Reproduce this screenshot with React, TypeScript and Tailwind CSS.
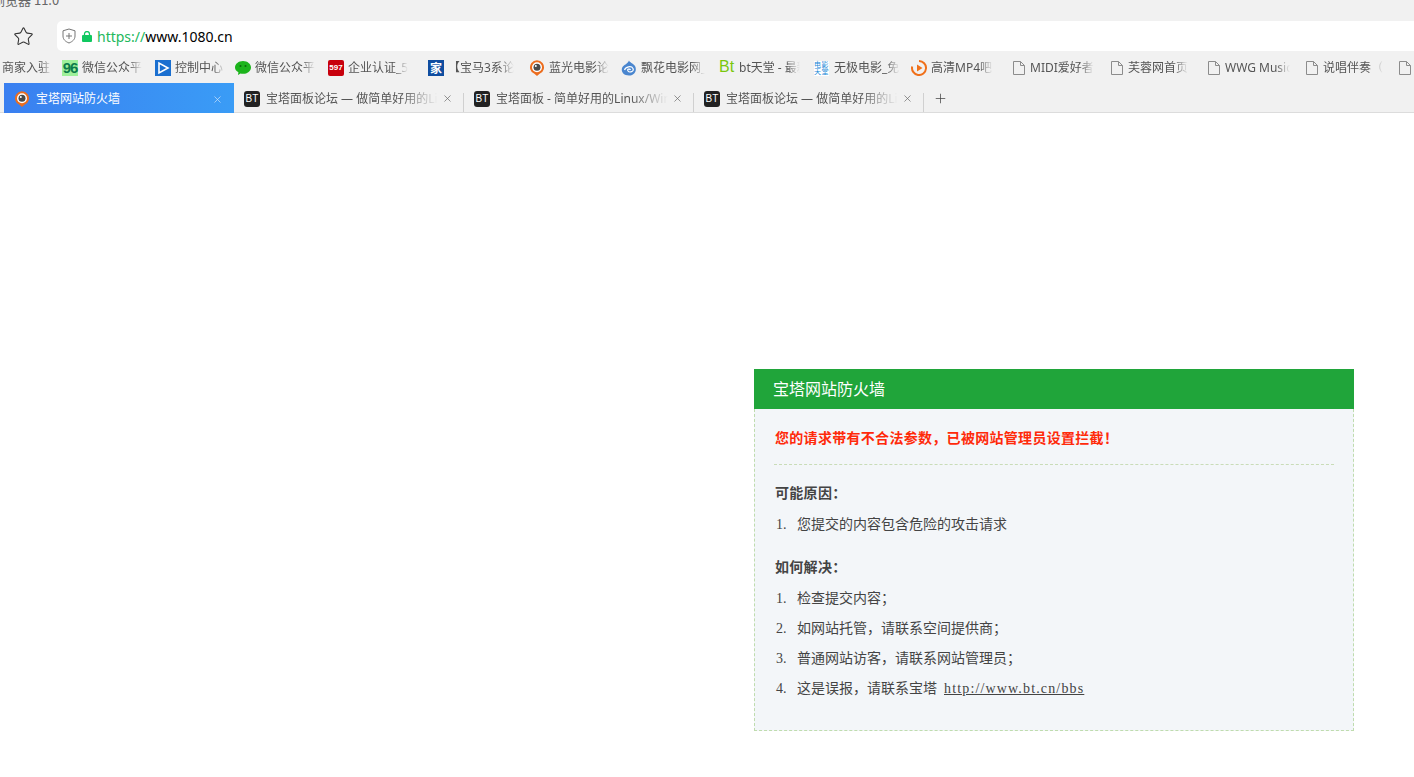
import { ReactNode } from 'react'
import { Star, Plus, X } from 'lucide-react'

const fade = '[mask-image:linear-gradient(to_right,#000_78%,transparent)]'

const DocIcon = () => (
  <svg width="12" height="14" viewBox="0 0 12 14" fill="none" stroke="#8c8c8c" strokeWidth="1" className="mr-[1px]">
    <path d="M.5.5h7l4 4v9H.5z" />
    <path d="M7.5.5v4h4" />
  </svg>
)

const PinIcon = ({ size = 16 }: { size?: number }) => (
  <svg width={size} height={size} viewBox="0 0 16 16">
    <path d="M8 16 5.4 13.8A7 7 0 1 1 10.6 13.8z" fill="#ec6d1e" />
    <circle cx="8" cy="7.2" r="5" fill="#fff" />
    <circle cx="8" cy="7.2" r="3.5" fill="#4a4a4a" />
    <circle cx="6.8" cy="6" r="1" fill="#fff" />
  </svg>
)

const BtIcon = () => (
  <span className="flex h-4 w-4 shrink-0 items-center justify-center rounded-[3px] bg-[#222] font-['Liberation_Sans',sans-serif] text-[10px] text-white">
    BT
  </span>
)

const bookmarks: { width: string; text: string; textWidth: string; icon?: ReactNode }[] = [
  { width: 'w-[60px]', textWidth: 'w-[50px]', text: '商家入驻' },
  {
    width: 'w-[93px]',
    textWidth: 'w-[60px]',
    text: '微信公众平台',
    icon: (
      <span className="flex h-4 w-4 items-center justify-center bg-[#9ef09a] font-['Liberation_Sans',sans-serif] text-[15px] font-bold tracking-[-1px] text-[#0c7a4a]">
        96
      </span>
    ),
  },
  {
    width: 'w-[80px]',
    textWidth: 'w-[50px]',
    text: '控制中心',
    icon: (
      <svg width="16" height="16" viewBox="0 0 16 16">
        <rect width="16" height="16" fill="#1a6fd0" />
        <path d="M4 3v10l9-5z" fill="#1a6fd0" stroke="#fff" strokeWidth="1.6" />
      </svg>
    ),
  },
  {
    width: 'w-[93px]',
    textWidth: 'w-[60px]',
    text: '微信公众平台',
    icon: (
      <svg width="16" height="16" viewBox="0 0 16 16">
        <path d="M8 1c4.400 0 8 2.900 8 6.400s-3.600 6.400-8 6.400c-.9 0-1.700-.1-2.500-.3L3 15l.4-2.800C1.300 11.100 0 9.300 0 7.400 0 3.900 3.600 1 8 1z" fill="#1cb41c" />
        <circle cx="5.500" cy="6" r="1" fill="#0a6a0a" />
        <circle cx="10.500" cy="6" r="1" fill="#0a6a0a" />
      </svg>
    ),
  },
  {
    width: 'w-[100px]',
    textWidth: 'w-[60px]',
    text: '企业认证_597',
    icon: (
      <span className="flex h-4 w-4 items-center justify-center rounded-[2px] bg-[#c8000c] font-['Liberation_Sans',sans-serif] text-[8px] font-bold text-white">
        597
      </span>
    ),
  },
  {
    width: 'w-[101px]',
    textWidth: 'w-[66px]',
    text: '【宝马3系论坛',
    icon: (
      <span className="flex h-4 w-4 items-center justify-center bg-[#0f4da0] font-['Noto_Sans_CJK_SC',sans-serif] text-[12px] font-bold leading-none text-white">
        家
      </span>
    ),
  },
  { width: 'w-[92px]', textWidth: 'w-[60px]', text: '蓝光电影论坛', icon: <PinIcon /> },
  {
    width: 'w-[98px]',
    textWidth: 'w-[64px]',
    text: '飘花电影网_',
    icon: (
      <svg width="16" height="16" viewBox="0 0 16 16">
        <path d="M8 .5c.5 2 4 2.500 6 5.500 2 3.500.5 9.500-6 9.500S-.5 10.500 1.500 7C3 5 7 3.500 8 .5z" fill="#4a86cf" />
        <path d="M3.500 10c1-3.500 7-4.500 8.500-1.500s-3.500 4.500-5 2.500 2-2.500 2.500-1" fill="none" stroke="#fff" strokeWidth="1.200" />
      </svg>
    ),
  },
  {
    width: 'w-[95px]',
    textWidth: 'w-[61px]',
    text: 'bt天堂 - 最新',
    icon: <span className="-mt-[2px] block w-4 font-['Liberation_Sans',sans-serif] text-[16px] leading-none text-[#7ac70c]">Bt</span>,
  },
  {
    width: 'w-[97px]',
    textWidth: 'w-[66px]',
    text: '无极电影_免费',
    icon: (
      <span className="mr-[1px] grid h-[15px] w-[15px] grid-cols-2 bg-white font-['Noto_Sans_CJK_SC',sans-serif] text-[7px] leading-[7px] text-[#1c8ad8]">
        <span>电</span>
        <span>影</span>
        <span>天</span>
        <span>堂</span>
      </span>
    ),
  },
  {
    width: 'w-[102px]',
    textWidth: 'w-[62px]',
    text: '高清MP4吧',
    icon: (
      <svg width="16" height="16" viewBox="0 0 16 16">
        <path d="M8 1a7 7 0 1 1-6.800 5.400" fill="none" stroke="#f0701a" strokeWidth="2" />
        <path d="M6 4.500v7l5.500-3.500z" fill="#f0701a" />
      </svg>
    ),
  },
  { width: 'w-[98px]', textWidth: 'w-[64px]', text: 'MIDI爱好者', icon: <DocIcon /> },
  { width: 'w-[97px]', textWidth: 'w-[60px]', text: '芙蓉网首页', icon: <DocIcon /> },
  { width: 'w-[98px]', textWidth: 'w-[65px]', text: 'WWG Music', icon: <DocIcon /> },
  { width: 'w-[93px]', textWidth: 'w-[60px]', text: '说唱伴奏（', icon: <DocIcon /> },
  { width: 'w-[15px]', textWidth: 'w-0', text: '', icon: <DocIcon /> },
]

const tabs = [
  { title: '宝塔面板论坛 — 做简单好用的Linux' },
  { title: '宝塔面板 - 简单好用的Linux/Windows' },
  { title: '宝塔面板论坛 — 做简单好用的Linux' },
]

const Item = ({ num, children }: { num: number; children: ReactNode }) => (
  <li className="flex h-[30px] items-center pl-[2px] text-[14px] text-[#444]">
    <span className="flex items-baseline">
      <span className="w-[21px] font-['Liberation_Serif',serif] text-[14px]">{num}.</span>
      <span>{children}</span>
    </span>
  </li>
)

export default function App() {
  return (
    <div className="flex h-[777px] w-[1414px] flex-col overflow-hidden bg-white font-['Noto_Sans_CJK_SC',sans-serif] [text-spacing-trim:space-all]">
      <header className="h-[113px] shrink-0 bg-[#f1f1f1]">
        <div className="h-[21px] overflow-hidden">
          <div className="-mt-[8px] -ml-[8px] text-[13px] leading-[16px] text-[#666]">浏览器 11.0</div>
        </div>

        <div className="flex h-[30px] items-center">
          <div className="flex w-[57px]">
            <Star size={21} strokeWidth={1.2} className="ml-[13px] text-[#333]" />
          </div>
          <div className="flex h-full flex-1 items-center rounded-l-[5px] bg-white pl-[5px]">
            <svg width="14" height="16" viewBox="0 0 14 16" fill="none" stroke="#777" strokeWidth="1">
              <path d="M7 1 13 2.800V8c0 3.500-2.500 5.600-6 7C3.500 13.600 1 11.500 1 8V2.800z" />
              <path d="M7 5v6M4 8h6" />
            </svg>
            <svg width="10" height="11" viewBox="0 0 10 11" className="ml-[6px]">
              <rect y="4" width="10" height="7" rx="1" fill="#10c860" />
              <path d="M2.500 5V3a2.500 2.500 0 0 1 5 0v2" fill="none" stroke="#10c860" strokeWidth="1.300" />
            </svg>
            <span className="ml-[5px] font-['Noto_Sans',sans-serif] text-[14px] text-black">
              <span className="text-[#22b85c]">https://</span>www.1080.cn
            </span>
          </div>
        </div>

        <nav className="flex h-[32px] items-center pl-[2px] pt-[2px] font-['Noto_Sans','Noto_Sans_CJK_SC',sans-serif] text-[12px] text-[#555]">
          {bookmarks.map((b, i) => (
            <div key={i} className={`flex shrink-0 items-center ${b.width}`}>
              {b.icon && <span className="mr-[4px] flex shrink-0 items-center">{b.icon}</span>}
              <span className={`overflow-hidden whitespace-nowrap ${b.textWidth} ${fade}`}>{b.text}</span>
            </div>
          ))}
        </nav>

        <div className="flex h-[30px] items-stretch border-b border-[#dcdcdc] pl-[4px] font-['Noto_Sans','Noto_Sans_CJK_SC',sans-serif] text-[12px]">
          <div className="-mb-px flex w-[230px] items-center bg-gradient-to-r from-[#3a7ff0] to-[#3a9cf6] pl-[10px] pr-[11px] pt-[2px] text-white">
            <PinIcon />
            <span className="ml-[6px] flex-1">宝塔网站防火墙</span>
            <X size={11} strokeWidth={1.5} className="text-[#cfe4fb]" />
          </div>
          {tabs.map((t, i) => (
            <div key={i} className="flex w-[230px] items-center pl-[10px] pt-[2px] text-[#555]">
              <BtIcon />
              <span className={`ml-[6px] w-[172px] overflow-hidden whitespace-nowrap ${fade}`}>{t.title}</span>
              <X size={11} strokeWidth={1.5} className="ml-auto text-[#666]" />
              <span className="ml-[10px] h-[19px] w-px self-end bg-[#d0d0d0]" />
            </div>
          ))}
          <div className="flex items-center pl-[9px] pt-[2px]">
            <Plus size={15} strokeWidth={1.2} className="text-[#444]" />
          </div>
        </div>
      </header>

      <main className="flex flex-1 justify-end pr-[60px] pt-[256px]">
        <section className="w-[600px]">
          <h1 className="flex h-[40px] items-center bg-[#20a53a] pb-[2px] pl-[19px] text-[16px] font-normal text-white">
            宝塔网站防火墙
          </h1>
          <div className="h-[322px] border border-t-0 border-dashed border-[#bfdcae] bg-[#f3f6f9] px-[19px] pt-[18px]">
            <h2 className="border-b border-dashed border-[#c9dcb8] pb-[17px] pl-px text-[14px] font-bold leading-[20px] tracking-[0.3px] text-[#ff2a0a]">
              您的请求带有不合法参数，已被网站管理员设置拦截！
            </h2>
            <h3 className="mt-[17px] mb-[7px] pl-px text-[14px] font-bold leading-[20px] tracking-[0.3px] text-[#444]">可能原因：</h3>
            <ul>
              <Item num={1}>您提交的内容包含危险的攻击请求</Item>
            </ul>
            <h3 className="mt-[17px] mb-[7px] pl-px text-[14px] font-bold leading-[20px] tracking-[0.3px] text-[#444]">如何解决：</h3>
            <ul>
              <Item num={1}>检查提交内容；</Item>
              <Item num={2}>如网站托管，请联系空间提供商；</Item>
              <Item num={3}>普通网站访客，请联系网站管理员；</Item>
              <Item num={4}>
                这是误报，请联系宝塔
                <a href="#" className="ml-[7px] font-['Liberation_Serif',serif] tracking-[1.15px] underline">
                  http://www.bt.cn/bbs
                </a>
              </Item>
            </ul>
          </div>
        </section>
      </main>
    </div>
  )
}
